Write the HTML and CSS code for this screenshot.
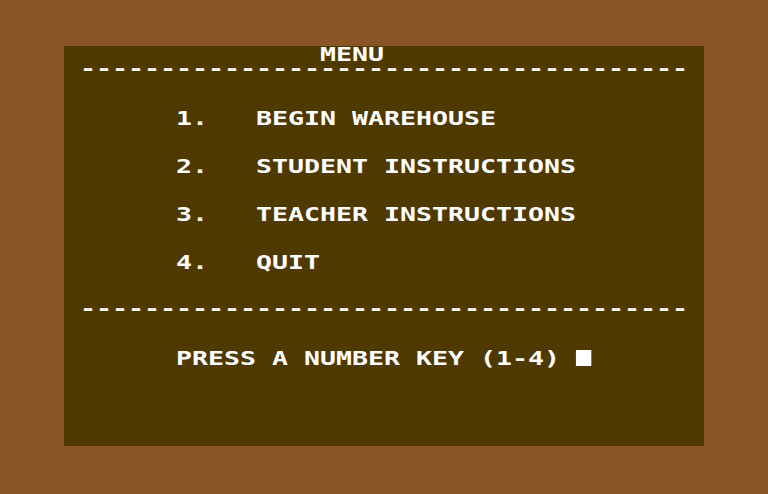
FILE: index.html
```html
<!DOCTYPE html>
<html lang="en">

<head>
	<meta charset="UTF-8">
	<title>Warehouse</title>
	<link rel="stylesheet" href="styles.css">
</head>

<body>
	<div class="screen">
		<div class="row"><span class="txt">                MENU</span></div>
		<div class="row"><span class="txt rule"> --------------------------------------</span></div>
		<div class="row"></div>
		<div class="row"></div>
		<div class="row"><span class="txt">       1.   BEGIN WAREHOUSE</span></div>
		<div class="row"></div>
		<div class="row"></div>
		<div class="row"><span class="txt">       2.   STUDENT INSTRUCTIONS</span></div>
		<div class="row"></div>
		<div class="row"></div>
		<div class="row"><span class="txt">       3.   TEACHER INSTRUCTIONS</span></div>
		<div class="row"></div>
		<div class="row"></div>
		<div class="row"><span class="txt">       4.   QUIT</span></div>
		<div class="row"></div>
		<div class="row"></div>
		<div class="row"><span class="txt rule"> --------------------------------------</span></div>
		<div class="row"></div>
		<div class="row"></div>
		<div class="row"><span class="txt">       PRESS A NUMBER KEY (1-4) <span class="cursor"></span></span></div>
	</div>
</body>

</html>
```

FILE: styles.css
```css
body {
	margin: 0;
	padding: 46px 64px 48px;
	background-color: #8a5426;
}

/* 40 x 25 text screen, 16px cells */
.screen {
	width: 640px;
	height: 400px;
	background-color: #4e3900;
	color: #fff;
	font-family: "DejaVu Sans Mono", monospace;
	font-weight: bold;
	font-size: 19px;
	line-height: 16px;
}

.row {
	height: 16px;
	white-space: pre;
}

/* widen the glyphs so each one takes a full 16px cell */
.txt {
	display: inline-block;
	transform: scaleX(1.3987);
	transform-origin: 0 0;
}

/* hyphens sit a little high in the cell */
.rule {
	transform: translateY(-2px) scaleX(1.3987);
}

.cursor {
	display: inline-block;
	width: 11.44px;
	height: 16px;
	background-color: #fff;
	vertical-align: top;
}
```
